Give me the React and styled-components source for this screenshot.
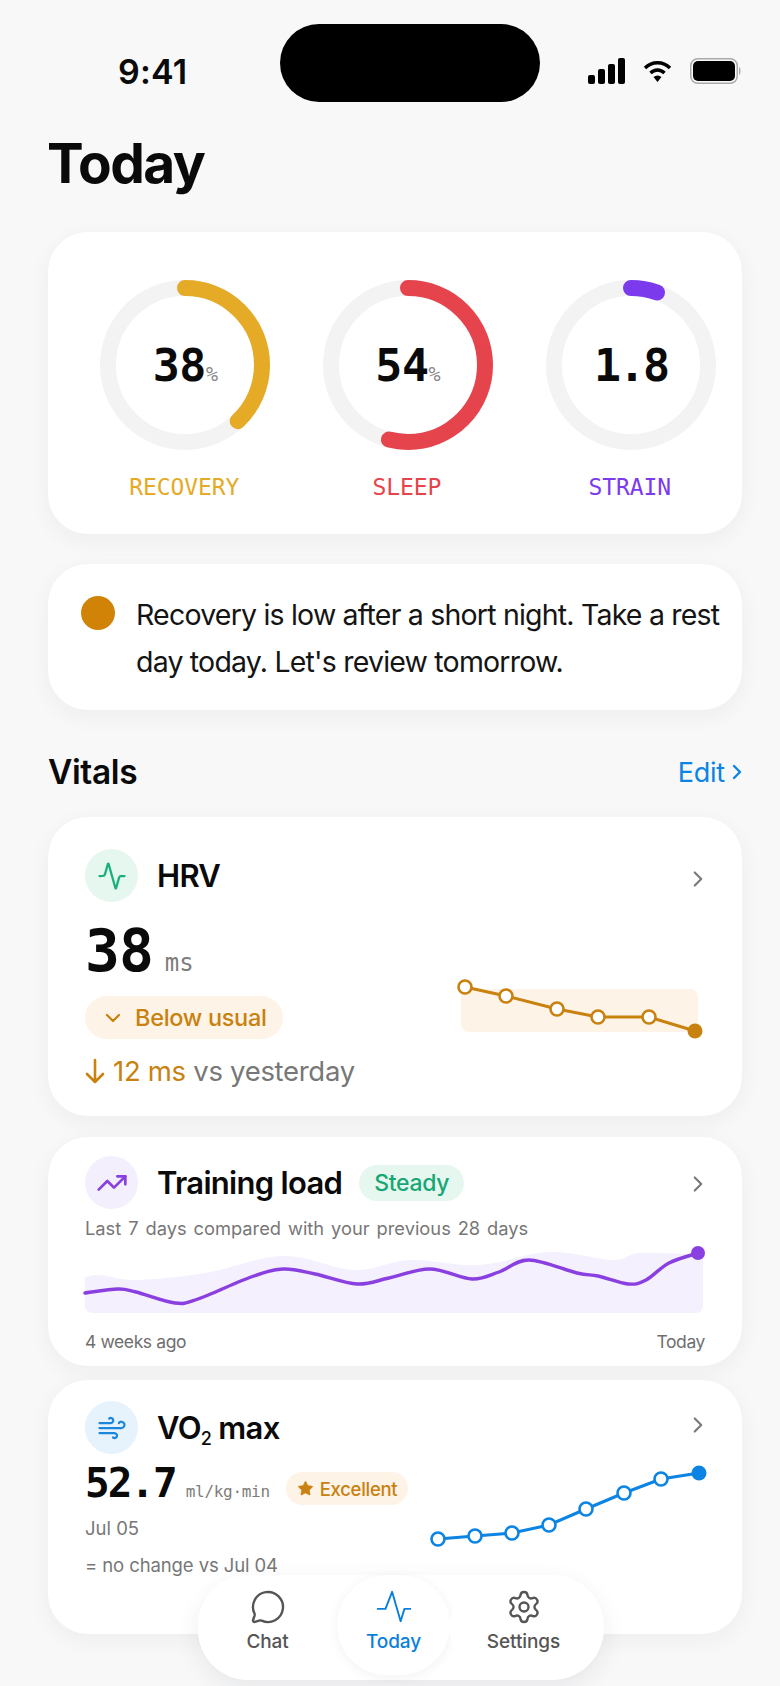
import React from 'react';
import styled, { createGlobalStyle } from 'styled-components';
import { Activity, TrendingUp, Wind, ChevronRight, ChevronDown, Star, MessageCircle, Settings } from 'lucide-react';

const Global = createGlobalStyle`
  html, body { margin: 0; padding: 0; background: #f8f8f8; }
  * { box-sizing: border-box; }
  body { font-family: Inter, "Noto Sans", sans-serif; color: #0a0a0a; }
`;
const MONO = '"DejaVu Sans Mono", "Liberation Mono", monospace';

const Page = styled.div`
  position: relative; width: 780px; height: 1686px; overflow: hidden; background: #f8f8f8;
`;
const StatusBar = styled.div`
  display: grid; grid-template-columns: 162px 260px 1fr; align-items: center;
  padding: 24px 39px 0 118px;
`;
const Clock = styled.div`
  font-size: 34px; font-weight: 600; line-height: 40px; padding-top: 18px; letter-spacing: .2px;
`;
const Island = styled.div`width: 260px; height: 78px; border-radius: 39px; background: #000;`;
const StatusIcons = styled.div`display: flex; align-items: center; justify-content: flex-end; gap: 18px; padding-top: 16px;`;
const Content = styled.div`padding: 0 38px 0 48px; display: flex; flex-direction: column;`;
const Title = styled.h1`
  margin: 31px 0 0 -1px; font-size: 55px; line-height: 60px; font-weight: 700; letter-spacing: -1.5px;
`;
const Card = styled.section`
  background: #fff; border-radius: 40px; box-shadow: 0 6px 22px rgba(30,40,60,.05);
  height: ${p => p.$h}px; margin-top: ${p => p.$mt}px; padding: ${p => p.$pad || '0'};
`;
const Rings = styled.div`
  display: grid; grid-template-columns: repeat(3, 1fr); padding: 48px 0 0 26px;
`;
const RingCol = styled.div`display: flex; flex-direction: column; align-items: center;`;
const RingBox = styled.div`display: grid; width: 170px; height: 170px; place-items: center; & > * { grid-area: 1 / 1; }`;
const RingValue = styled.div`
  font-family: ${MONO}; font-weight: 700; font-size: 45px; line-height: 1; display: flex; align-items: baseline; letter-spacing: ${p => p.$ls}px;
`;
const Pct = styled.span`font-size: 20px; font-weight: 400; color: #888; margin-left: 0; letter-spacing: 0;`;
const RingLabel = styled.div`
  font-family: ${MONO}; font-size: 23px; line-height: 28px; margin-top: 23px; color: ${p => p.$c}; letter-spacing: -.1px; margin-left: -2px;
`;
const Alert = styled.div`display: flex; gap: 21px; padding: 32px 20px 0 33px;`;
const Dot = styled.div`width: 34px; height: 34px; border-radius: 50%; background: #d08307; flex: none;`;
const AlertText = styled.p`margin: -5px 0 0; font-size: 28.5px; line-height: 47px; letter-spacing: -.8px; color: #141414;`;
const SectionHead = styled.div`display: flex; justify-content: space-between; align-items: center; margin-top: 42px; height: 40px;`;
const SectionTitle = styled.h2`margin: 0; font-size: 33.5px; font-weight: 600; letter-spacing: -.4px;`;
const EditLink = styled.a`color: #0b84e3; font-size: 27px; display: flex; align-items: center; gap: 0; margin-right: -7px; letter-spacing: -.2px;`;
const MetricHead = styled.div`display: flex; align-items: center; height: 53px;`;
const IconCircle = styled.div`
  width: 53px; height: 53px; border-radius: 50%; flex: none; display: grid; place-items: center; background: ${p => p.$bg}; color: ${p => p.$c};
`;
const MetricName = styled.h3`margin: 0 0 0 19px; font-size: 31px; font-weight: 600; letter-spacing: -.7px; sub { font-size: 18px; line-height: 0; font-weight: 500; vertical-align: -6px; }`;
const Chevron = styled.div`margin: ${p => p.$mt || 0}px -6px 0 auto; color: #7a7a7a; display: flex;`;
const MetricBody = styled.div`display: flex; justify-content: space-between; margin-top: ${p => p.$mt || 0}px;`;
const Column = styled.div`display: flex; flex-direction: column; align-items: flex-start;`;
const ValueRow = styled.div`display: flex; align-items: baseline; gap: ${p => p.$gap}px;`;
const BigValue = styled.div`font-family: ${MONO}; font-weight: 700; font-size: ${p => p.$s}px; line-height: ${p => p.$lh}px; letter-spacing: ${p => p.$ls}px;`;
const Unit = styled.span`font-family: ${MONO}; color: #7d7d7d; font-size: ${p => p.$s}px; letter-spacing: ${p => p.$ls || 0}px;`;
const Pill = styled.div`
  display: inline-flex; align-items: center; border-radius: 24px; background: ${p => p.$bg}; color: ${p => p.$c}; font-weight: 500;
  font-size: ${p => p.$s}px; height: ${p => p.$h}px; padding: 0 ${p => p.$px}px; gap: ${p => p.$gap || 0}px; margin-left: ${p => p.$ml || 0}px; margin-top: ${p => p.$mt || 0}px; letter-spacing: -.3px;
`;
const Delta = styled.div`display: flex; align-items: center; margin-top: 14px; font-size: 27.5px; line-height: 36px; color: #777; letter-spacing: -.3px; gap: 8px;`;
const Amber = styled.span`color: #c9810f;`;
const Sub = styled.div`font-size: ${p => p.$s}px; color: #777; line-height: 24px; margin-top: ${p => p.$mt}px; word-spacing: ${p => p.$ws || 0}px; letter-spacing: ${p => p.$ls || 0}px;`;
const Chart = styled.svg`display: block; flex: none; margin-top: ${p => p.$mt || 0}px; margin-right: ${p => p.$mr || 0}px; overflow: visible;`;
const AxisRow = styled.div`display: flex; justify-content: space-between; font-size: 17.5px; color: #6f6f6f; margin-top: 17px; letter-spacing: -.4px;`;
const Nav = styled.nav`
  position: absolute; left: 198px; top: 1575px; width: 406px; height: 105px; border-radius: 52px; background: #fff;
  box-shadow: 0 8px 24px rgba(30,40,60,.08); display: grid; grid-template-columns: 139px 113px 147px;
`;
const NavItem = styled.div`
  display: flex; flex-direction: column; align-items: center; gap: 5px; padding-top: 14px; height: ${p => p.$active ? 100 : 105}px; color: ${p => p.$active ? '#0b7fdc' : '#555'};
  border-radius: 50px; background: #fff; font-size: 19px; font-weight: 500; letter-spacing: -.1px;
  ${p => p.$active && 'box-shadow: 0 2px 12px rgba(30,40,60,.06);'}
  svg { color: ${p => p.$active ? '#0b7fdc' : '#555'}; }
`;

function smooth(pts) {
  let d = `M${pts[0][0]} ${pts[0][1]}`;
  for (let i = 0; i < pts.length - 1; i++) {
    const p0 = pts[i - 1] || pts[i], p1 = pts[i], p2 = pts[i + 1], p3 = pts[i + 2] || p2;
    d += ` C${p1[0] + (p2[0] - p0[0]) / 6} ${p1[1] + (p2[1] - p0[1]) / 6} ${p2[0] - (p3[0] - p1[0]) / 6} ${p2[1] - (p3[1] - p1[1]) / 6} ${p2[0]} ${p2[1]}`;
  }
  return d;
}

function Ring({ pct, color, label, value, unit, ls }) {
  return (
    <RingCol>
      <RingBox>
        <svg width="170" height="170" viewBox="0 0 170 170">
          <circle cx="85" cy="85" r="77" fill="none" stroke="#f3f3f3" strokeWidth="16" />
          <circle cx="85" cy="85" r="77" fill="none" stroke={color} strokeWidth="16" strokeLinecap="round" pathLength="100"
            strokeDasharray={`${pct} 100`} transform="rotate(-90 85 85)" />
        </svg>
        <RingValue $ls={ls}>{value}{unit && <Pct>%</Pct>}</RingValue>
      </RingBox>
      <RingLabel $c={color}>{label}</RingLabel>
    </RingCol>
  );
}

function DotLine({ pts, color, w, h, mt, mr, band }) {
  const last = pts[pts.length - 1];
  return (
    <Chart width={w} height={h} viewBox={`0 0 ${w} ${h}`} $mt={mt} $mr={mr}>
      {band && <rect {...band} rx="8" fill="#fdf4e7" />}
      <polyline points={pts.map(p => p.join(',')).join(' ')} fill="none" stroke={color} strokeWidth="3" />
      {pts.slice(0, -1).map((p, i) => <circle key={i} cx={p[0]} cy={p[1]} r="6.5" fill="#fff" stroke={color} strokeWidth="2.6" />)}
      <circle cx={last[0]} cy={last[1]} r="7.5" fill={color} />
    </Chart>
  );
}

const loadLine = [[0,43],[33,39],[51,42],[90,53],[113,49],[166,27],[198,19],[230,24],[272,34],[304,28],[345,19],[387,29],[414,22],[444,10],[492,23],[513,26],[543,34],[561,30],[584,13],[613,3]];
const loadTop = [[0,27],[15,25],[51,30],[120,23],[198,6],[270,20],[325,10],[394,15],[464,2],[528,10],[555,3],[618,5]];
const areaD = smooth(loadTop) + ' L618 55 Q618 63 610 63 L8 63 Q0 63 0 55 Z';

export default function App() {
  return (
    <Page>
      <Global />
      <StatusBar>
        <Clock>9:41</Clock>
        <Island />
        <StatusIcons>
          <svg width="37" height="26" viewBox="0 0 37 26" fill="#000">
            <rect x="0" y="17" width="7" height="9" rx="2" /><rect x="10" y="11" width="7" height="15" rx="2" />
            <rect x="20" y="6" width="7" height="20" rx="2" /><rect x="30" y="0" width="7" height="26" rx="2" />
          </svg>
          <svg width="29" height="22" viewBox="0 0 29 22" fill="none" stroke="#000" strokeWidth="3.4">
            <path d="M2 8 C9 1 20 1 27 8" /><path d="M7.5 13 C11.5 9 17.5 9 21.5 13" /><path d="M14.5 22 L10.5 17 C13 15 16 15 18.5 17 Z" fill="#000" stroke="none" />
          </svg>
          <svg width="51" height="26" viewBox="0 0 51 26">
            <rect x=".75" y=".75" width="46.5" height="24.5" rx="7" fill="none" stroke="#aaa" strokeWidth="1.5" />
            <rect x="3" y="3" width="42" height="20" rx="5" fill="#000" />
            <path d="M49 9 C51 10 51 16 49 17 Z" fill="#aaa" />
          </svg>
        </StatusIcons>
      </StatusBar>
      <Content>
        <Title>Today</Title>
        <Card $h={302} $mt={39}>
          <Rings>
            <Ring pct={38} color="#e5ab27" label="RECOVERY" value="38" unit ls={-.5} />
            <Ring pct={54} color="#e5444c" label="SLEEP" value="54" unit ls={-.5} />
            <Ring pct={5.5} color="#7c3aed" label="STRAIN" value="1.8" ls={-2.6} />
          </Rings>
        </Card>
        <Card $h={146} $mt={30}>
          <Alert>
            <Dot />
            <AlertText>Recovery is low after a short night. Take a rest day today. Let's review tomorrow.</AlertText>
          </Alert>
        </Card>
        <SectionHead>
          <SectionTitle>Vitals</SectionTitle>
          <EditLink>Edit<ChevronRight size={24} strokeWidth={2.4} /></EditLink>
        </SectionHead>
        <Card $h={299} $mt={25} $pad="32px 37px 0 37px">
          <MetricHead>
            <IconCircle $bg="#e6f7f0" $c="#16b07c"><Activity size={30} strokeWidth={1.8} /></IconCircle>
            <MetricName>HRV</MetricName>
            <Chevron $mt={6}><ChevronRight size={26} strokeWidth={2} /></Chevron>
          </MetricHead>
          <MetricBody $mt={14}>
            <Column>
              <ValueRow $gap={12}>
                <BigValue $s={58} $lh={70} $ls={-1}>38</BigValue>
                <Unit $s={24}>ms</Unit>
              </ValueRow>
              <Pill $bg="#fdf3e6" $c="#c9810f" $s={23.5} $h={43} $px={16} $gap={10} $mt={10}>
                <ChevronDown size={24} strokeWidth={2.2} />Below usual
              </Pill>
              <Delta>
                <svg width="20" height="26" viewBox="0 0 20 26" fill="none" stroke="#c9810f" strokeWidth="2.6" strokeLinecap="round" strokeLinejoin="round">
                  <path d="M10 2 V24 M2 16 L10 24 L18 16" />
                </svg>
                <span><Amber>12 ms</Amber> vs yesterday</span>
              </Delta>
            </Column>
            <DotLine w={246} h={60} mt={63} mr={-1.5} color="#c9810f"
              pts={[[4,8],[45,17],[96,30],[137,38],[188,38],[234,52]]} band={{ x: 0, y: 10, width: 237, height: 43 }} />
          </MetricBody>
        </Card>
        <Card $h={229} $mt={21} $pad="19px 37px 0 37px">
          <MetricHead>
            <IconCircle $bg="#f3effd" $c="#8a3fe0"><TrendingUp size={32} strokeWidth={2} /></IconCircle>
            <MetricName>Training load</MetricName>
            <Pill $bg="#e6f7f0" $c="#16a874" $s={23} $h={36} $px={15} $ml={17}>Steady</Pill>
            <Chevron $mt={2}><ChevronRight size={26} strokeWidth={2} /></Chevron>
          </MetricHead>
          <Sub $s={18.3} $ws={1.8} $mt={7}>Last 7 days compared with your previous 28 days</Sub>
          <Chart width={620} height={64} viewBox="0 0 620 64" $mt={10}>
            <path d={areaD} fill="#f4f0fd" />
            <path d={smooth(loadLine)} fill="none" stroke="#8a3fe0" strokeWidth="3.4" strokeLinecap="round" />
            <circle cx="613" cy="3" r="7" fill="#8a3fe0" />
          </Chart>
          <AxisRow><span>4 weeks ago</span><span>Today</span></AxisRow>
        </Card>
        <Card $h={254} $mt={14} $pad="21px 37px 0 37px">
          <MetricHead>
            <IconCircle $bg="#e6f3fd" $c="#1b87dc"><Wind size={30} strokeWidth={1.8} /></IconCircle>
            <MetricName>VO<sub>2</sub> max</MetricName>
            <Chevron $mt={-6}><ChevronRight size={26} strokeWidth={2} /></Chevron>
          </MetricHead>
          <MetricBody>
            <Column>
              <ValueRow $gap={10}>
                <BigValue $s={41} $lh={58} $ls={-2}>52.7</BigValue>
                <Unit $s={16} $ls={-.3}>ml/kg·min</Unit>
                <Pill $bg="#fdf3e6" $c="#c9810f" $s={18.5} $h={33} $px={11} $gap={6} $ml={6}>
                  <Star size={17} fill="#c9810f" strokeWidth={1} />Excellent
                </Pill>
              </ValueRow>
              <Sub $s={18.5} $mt={4}>Jul 05</Sub>
              <Sub $s={18.5} $ls={-.1} $mt={13}>= no change vs Jul 04</Sub>
            </Column>
            <DotLine w={275} h={80} mt={11} mr={0} color="#0b84e3"
              pts={[[8,74],[45,71],[82,68],[119,60],[156,44],[194,28],[231,14],[269,8]]} />
          </MetricBody>
        </Card>
      </Content>
      <Nav>
        <NavItem>
          <MessageCircle size={36} strokeWidth={1.6} />Chat
        </NavItem>
        <NavItem $active>
          <svg width="36" height="36" viewBox="0 0 38 38" fill="none" stroke="currentColor" strokeWidth="2">
            <path d="M1 21 H10 L17 3 L26 34 L30 21 H37" strokeLinejoin="round" />
          </svg>
          Today
        </NavItem>
        <NavItem>
          <Settings size={36} strokeWidth={1.6} />Settings
        </NavItem>
      </Nav>
    </Page>
  );
}
